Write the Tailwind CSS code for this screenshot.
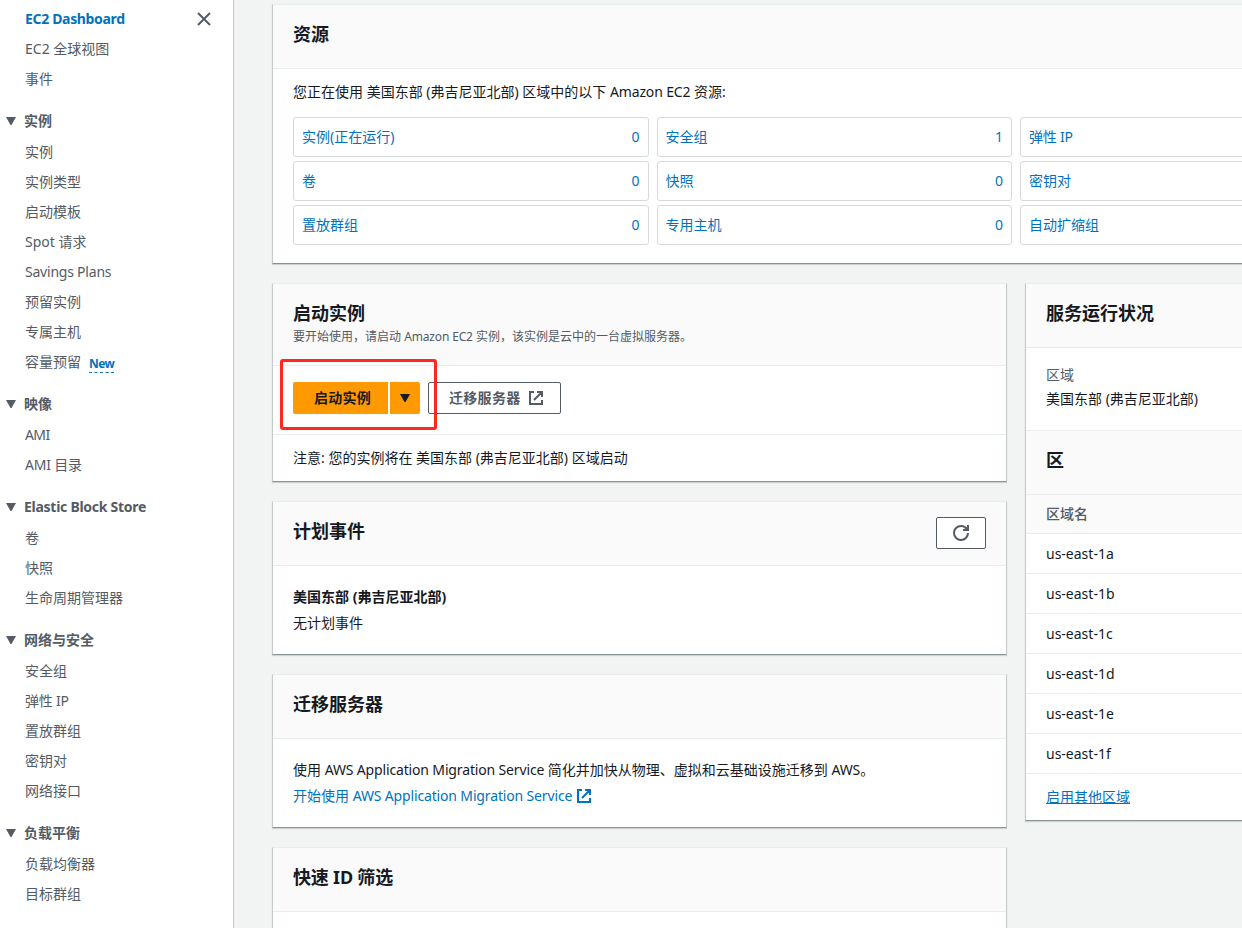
<!DOCTYPE html>
<html lang="zh-CN">
<head>
<meta charset="utf-8">
<title>EC2 Dashboard</title>
<script src="https://cdn.jsdelivr.net/npm/@tailwindcss/browser@4"></script>
</head>
<body class="h-[928px] w-[1242px] overflow-hidden bg-[#f2f3f3] font-['Noto_Sans','Noto_Sans_CJK_SC',sans-serif] text-[14px] leading-[22px] text-[#16191f]">
<div class="flex h-[928px] w-[1242px] overflow-hidden">

  <nav class="h-full w-[234px] shrink-0 overflow-hidden border-r border-[#c3c8c9] bg-white pt-1 text-[#545b64]">
    <ul class="pl-[25px] *:flex *:h-[30px] *:items-center">
      <li class="justify-between pr-[22px] font-bold text-[#0073bb]">
        <span class="tracking-[-0.33px]">EC2 Dashboard</span>
        <svg class="size-[14px]" viewBox="0 0 14 14" fill="none" stroke="#545b64" stroke-width="2"><path d="M1 1l12 12M13 1L1 13"/></svg>
      </li>
      <li>EC2 全球视图</li>
      <li>事件</li>
    </ul>
    <h3 class="flex h-[43px] items-center gap-2 pt-[11px] pl-[6px] font-bold"><svg class="h-[8px] w-[10px]" viewBox="0 0 10 8"><path d="M0 0h10L5.5 8h-1z" fill="#545b64"/></svg>实例</h3>
    <ul class="pl-[25px] *:flex *:h-[30px] *:items-center">
      <li>实例</li>
      <li>实例类型</li>
      <li>启动模板</li>
      <li>Spot 请求</li>
      <li class="tracking-[-0.22px]">Savings Plans</li>
      <li>预留实例</li>
      <li>专属主机</li>
      <li class="gap-2">容量预留<span class="mt-[3px] border-b border-dashed border-[#0073bb] text-[12px] leading-[17px] font-bold tracking-[-0.6px] text-[#0073bb]">New</span></li>
    </ul>
    <h3 class="flex h-[43px] items-center gap-2 pt-[11px] pl-[6px] font-bold"><svg class="h-[8px] w-[10px]" viewBox="0 0 10 8"><path d="M0 0h10L5.5 8h-1z" fill="#545b64"/></svg>映像</h3>
    <ul class="pl-[25px] *:flex *:h-[30px] *:items-center">
      <li class="tracking-[-0.6px]">AMI</li>
      <li class="tracking-[-0.2px]">AMI 目录</li>
    </ul>
    <h3 class="flex h-[43px] items-center gap-2 pt-[11px] pl-[6px] font-bold tracking-[-0.27px]"><svg class="h-[8px] w-[10px]" viewBox="0 0 10 8"><path d="M0 0h10L5.5 8h-1z" fill="#545b64"/></svg>Elastic Block Store</h3>
    <ul class="pl-[25px] *:flex *:h-[30px] *:items-center">
      <li>卷</li>
      <li>快照</li>
      <li>生命周期管理器</li>
    </ul>
    <h3 class="flex h-[43px] items-center gap-2 pt-[11px] pl-[6px] font-bold"><svg class="h-[8px] w-[10px]" viewBox="0 0 10 8"><path d="M0 0h10L5.5 8h-1z" fill="#545b64"/></svg>网络与安全</h3>
    <ul class="pl-[25px] *:flex *:h-[30px] *:items-center">
      <li>安全组</li>
      <li class="tracking-[-0.2px]">弹性 IP</li>
      <li>置放群组</li>
      <li>密钥对</li>
      <li>网络接口</li>
    </ul>
    <h3 class="flex h-[43px] items-center gap-2 pt-[11px] pl-[6px] font-bold"><svg class="h-[8px] w-[10px]" viewBox="0 0 10 8"><path d="M0 0h10L5.5 8h-1z" fill="#545b64"/></svg>负载平衡</h3>
    <ul class="pl-[25px] *:flex *:h-[30px] *:items-center">
      <li>负载均衡器</li>
      <li>目标群组</li>
    </ul>
  </nav>

  <main class="flex w-[1160px] shrink-0 flex-col gap-[19px] pt-1 pl-[38px]">
    <section class="h-[260px] w-[1122px] shrink-0 border border-t-[#eaeded] border-r-[#c5cbcb] border-b-[#879596] border-l-[#c5cbcb] bg-white shadow-[0_1px_1px_rgba(0,28,36,0.15)]">
      <h2 class="flex h-[64px] items-center border-b border-[#eaeded] bg-[#fafafa] px-5 pb-[5px] text-[18px] font-bold">资源</h2>
      <div class="px-5 pt-[12px]">
        <p>您正在使用 美国东部 (弗吉尼亚北部) 区域中的以下 <span class="tracking-[-0.15px]">Amazon EC2</span> 资源:</p>
        <div class="mt-[14px] grid grid-cols-[repeat(3,355.5px)] gap-x-2 gap-y-1 text-[#0073bb] *:flex *:h-10 *:items-center *:justify-between *:rounded-[3px] *:border *:border-[#d5dbdb] *:px-2">
          <a><span>实例(正在运行)</span><span>0</span></a>
          <a><span>安全组</span><span>1</span></a>
          <a><span class="tracking-[-0.2px]">弹性 IP</span></a>
          <a><span>卷</span><span>0</span></a>
          <a><span>快照</span><span>0</span></a>
          <a><span>密钥对</span></a>
          <a><span>置放群组</span><span>0</span></a>
          <a><span>专用主机</span><span>0</span></a>
          <a><span>自动扩缩组</span></a>
        </div>
      </div>
    </section>

    <div class="flex items-start gap-[18px]">
      <div class="flex w-[735px] shrink-0 flex-col gap-[19px] *:border *:border-t-[#eaeded] *:border-r-[#c5cbcb] *:border-b-[#879596] *:border-l-[#c5cbcb] *:bg-white *:shadow-[0_1px_1px_rgba(0,28,36,0.15)]">
        <section class="h-[199px]">
          <header class="h-[82px] border-b border-[#eaeded] bg-[#fafafa] px-5 pt-[17px]">
            <h2 class="text-[18px] leading-[24px] font-bold">启动实例</h2>
            <p class="pt-px text-[12px] leading-[22px] text-[#545b64]">要开始使用，请启动 <span class="tracking-[-0.15px]">Amazon EC2</span> 实例，该实例是云中的一台虚拟服务器。</p>
          </header>
          <div class="relative flex h-[69px] border-b border-[#eaeded] px-5 pt-4 font-bold">
            <button class="h-8 w-[95px] rounded-l-[2px] bg-[#ff9900] pl-1 tracking-[0.25px]">启动实例</button>
            <button class="ml-[2px] flex h-8 w-[30px] items-center justify-center rounded-r-[2px] bg-[#ff9900]"><svg class="h-[8px] w-[10px]" viewBox="0 0 10 8"><path d="M0 0h10L5.5 8h-1z" fill="#16191f"/></svg></button>
            <button class="ml-2 flex h-8 w-[133px] items-center gap-[8px] rounded-[2px] border border-[#545b64] bg-white pl-5 tracking-[0.3px] text-[#545b64]">迁移服务器
              <svg class="size-[14px]" viewBox="0 0 14 14" fill="none" stroke="#545b64" stroke-width="2"><path d="M5 1H1v12h12V9M8 1h5v5M13 1L5 9"/></svg>
            </button>
            <div class="absolute top-[-7px] left-[7px] h-[71px] w-[157px] rounded-[3px] border-3 border-[#fb2a1c]"></div>
          </div>
          <p class="px-5 pt-[12px]">注意: 您的实例将在 美国东部 (弗吉尼亚北部) 区域启动</p>
        </section>

        <section class="h-[154px]">
          <header class="flex h-[64px] items-center justify-between border-b border-[#eaeded] bg-[#fafafa] px-5 pb-[2px]">
            <h2 class="pb-[3px] text-[18px] font-bold">计划事件</h2>
            <button class="flex h-8 w-[50px] items-center justify-center rounded-[2px] border border-[#545b64] bg-white">
              <svg class="size-[16px]" viewBox="0 0 16 16" fill="none" stroke="#545b64" stroke-width="2"><path d="M15 8c0 3.87-3.13 7-7 7s-7-3.13-7-7 3.13-7 7-7c2.79 0 5.2 1.63 6.33 4M10 5h5V0"/><path d="M11 4.5L15 1v4z" fill="#545b64" stroke="none"/></svg>
            </button>
          </header>
          <div class="px-5 pt-[18px] leading-[26px]">
            <p class="font-bold">美国东部 (弗吉尼亚北部)</p>
            <p>无计划事件</p>
          </div>
        </section>

        <section class="h-[154px]">
          <h2 class="flex h-[64px] items-center border-b border-[#eaeded] bg-[#fafafa] px-5 pb-[5px] text-[18px] font-bold">迁移服务器</h2>
          <div class="px-5 pt-[18px] leading-[26px]">
            <p>使用 <span class="tracking-[-0.15px]">AWS Application Migration Service</span> 简化并加快从物理、虚拟和云基础设施迁移到 <span class="tracking-[-0.15px]">AWS</span>。</p>
            <a class="flex items-center gap-[5px] text-[#0073bb]"><span>开始使用 <span class="tracking-[-0.15px]">AWS Application Migration Service</span></span>
              <svg class="size-[14px]" viewBox="0 0 14 14" fill="none" stroke="#0073bb" stroke-width="2"><path d="M5 1H1v12h12V9M8 1h5v5M13 1L5 9"/></svg>
            </a>
          </div>
        </section>

        <section class="h-[154px]">
          <h2 class="flex h-[64px] items-center border-b border-[#eaeded] bg-[#fafafa] px-5 pb-[5px] text-[18px] font-bold tracking-[-0.2px]">快速 ID 筛选</h2>
        </section>
      </div>

      <section class="h-[538px] w-[369px] shrink-0 border border-t-[#eaeded] border-r-[#c5cbcb] border-b-[#879596] border-l-[#c5cbcb] bg-white shadow-[0_1px_1px_rgba(0,28,36,0.15)]">
        <h2 class="flex h-[64px] items-center border-b border-[#eaeded] bg-[#fafafa] px-5 pb-[5px] text-[18px] font-bold">服务运行状况</h2>
        <div class="h-[83px] border-b border-[#eaeded] px-5 pt-[15px] leading-[24px]">
          <p class="text-[#545b64]">区域</p>
          <p>美国东部 (弗吉尼亚北部)</p>
        </div>
        <h2 class="flex h-[64px] items-center border-b border-[#eaeded] bg-[#fafafa] px-5 pb-[5px] text-[18px] font-bold">区</h2>
        <div class="flex h-[39px] items-center border-b border-[#eaeded] bg-[#fafafa] px-5 font-medium text-[#545b64]">区域名</div>
        <ul class="*:flex *:h-10 *:items-center *:border-b *:border-[#eaeded] *:px-5 *:pt-px">
          <li>us-east-1a</li>
          <li>us-east-1b</li>
          <li>us-east-1c</li>
          <li>us-east-1d</li>
          <li>us-east-1e</li>
          <li>us-east-1f</li>
        </ul>
        <a class="flex h-[46px] items-center px-5 text-[#0073bb] underline">启用其他区域</a>
      </section>
    </div>
  </main>
</div>
</body>
</html>
